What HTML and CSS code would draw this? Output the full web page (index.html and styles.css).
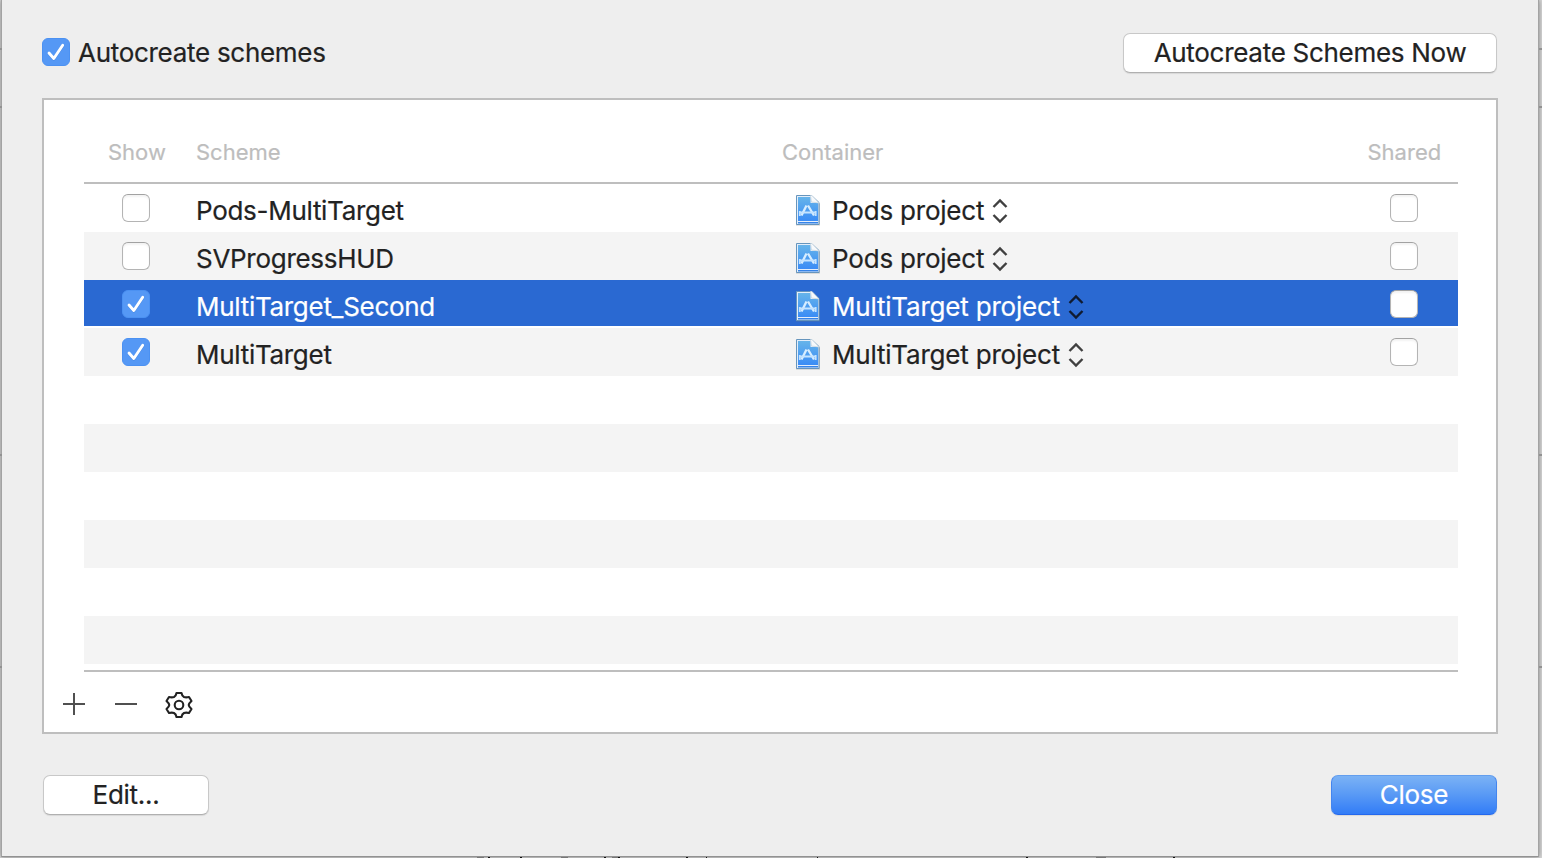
FILE: index.html
```
<!DOCTYPE html>
<html lang="en">
<head>
<meta charset="utf-8">
<title>Manage Schemes</title>
<link rel="stylesheet" href="styles.css">
</head>
<body>
<svg class="defs" width="0" height="0">
  <defs>
    <linearGradient id="doc-fill" x1="0" y1="0" x2="0" y2="1"><stop offset="0" stop-color="#66b4ea"/><stop offset="1" stop-color="#3a8cf6"/></linearGradient>
    <symbol id="doc" viewBox="0 0 26 34">
      <path d="M1 3H17L25 11V32.500H1Z" fill="#77777766"/>
      <path d="M1.500 2.500H16.500L24 9.500V31.500H1.500Z" fill="#e4eefa" stroke="#6695bd" stroke-width="1"/>
      <path d="M3 4H15.500V10H23V28H3Z" fill="url(#doc-fill)"/>
      <path d="M3 29H23V30.500H3Z" fill="#3583e8"/>
      <path d="M15.500 2.500L16.500 9L24 10L17 2.500Z" fill="#f7f9fb" stroke="#c4d2dd" stroke-width=".7"/>
      <path d="M11.500 12.500L6.500 22.500M13 12.500L19 22.500" fill="none" stroke="#d7edff" stroke-width="2.300"/>
      <path d="M4 19.500H21.500M4.800 18V23M20.700 18V23" fill="none" stroke="#c4e3ff" stroke-width="1.800"/>
    </symbol>
    <symbol id="arrows" viewBox="0 0 16 26"><path d="M1.500 9L8 2.500L14.500 9M1.500 17L8 23.500L14.500 17" fill="none" stroke="currentColor" stroke-width="2.400"/></symbol>
    <symbol id="check" viewBox="0 0 28 28"><path d="M7 15.500L11.800 21L21 7.500" fill="none" stroke="#2468bd" stroke-opacity=".35" stroke-width="3" stroke-linecap="round" stroke-linejoin="round"/><path d="M7 15L11.800 20.500L20.700 7.300" fill="none" stroke="#fff" stroke-width="2.900" stroke-linecap="round" stroke-linejoin="round"/></symbol>
  </defs>
</svg>
<main class="sheet">
  <header class="top">
    <label class="auto"><span class="box on"><svg><use href="#check"/></svg></span><span class="t">Autocreate schemes</span></label>
    <button class="button now"><span class="t">Autocreate Schemes Now</span></button>
  </header>
  <section class="panel">
    <div class="table">
      <div class="row head"><span class="t show">Show</span><span class="t">Scheme</span><span class="t">Container</span><span class="t">Shared</span></div>
      <div class="row"><span class="box"></span><span class="t">Pods-MultiTarget</span><span class="project"><svg class="doc"><use href="#doc"/></svg><span class="t">Pods project</span><svg class="arrows"><use href="#arrows"/></svg></span><span class="box"></span></div>
      <div class="row"><span class="box"></span><span class="t">SVProgressHUD</span><span class="project"><svg class="doc"><use href="#doc"/></svg><span class="t">Pods project</span><svg class="arrows"><use href="#arrows"/></svg></span><span class="box"></span></div>
      <div class="row selected"><span class="box on"><svg><use href="#check"/></svg></span><span class="t">MultiTarget_Second</span><span class="project"><svg class="doc"><use href="#doc"/></svg><span class="t">MultiTarget project</span><svg class="arrows"><use href="#arrows"/></svg></span><span class="box"></span></div>
      <div class="row"><span class="box on"><svg><use href="#check"/></svg></span><span class="t">MultiTarget</span><span class="project"><svg class="doc"><use href="#doc"/></svg><span class="t">MultiTarget project</span><svg class="arrows"><use href="#arrows"/></svg></span><span class="box"></span></div>
      <div class="row"></div><div class="row"></div><div class="row"></div><div class="row"></div><div class="row"></div><div class="row"></div>
    </div>
    <div class="tools">
      <svg width="22" height="22" viewBox="0 0 22 22"><path d="M0 11H22M11 0V22" stroke="#505050" stroke-width="2"/></svg>
      <svg width="22" height="22" viewBox="0 0 22 22"><path d="M0 11H22" stroke="#505050" stroke-width="2"/></svg>
      <svg class="gear" width="28" height="28" viewBox="0 0 28 28"><g fill="none" stroke="#222" stroke-width="2.100" stroke-linejoin="round"><path d="M11.500 2H16.500Q17 5 19 6Q21 6.800 24 6L26.500 10Q23.700 12.500 23.700 14Q23.700 15.500 26.500 18L24 22Q21 21.200 19 22Q17 23 16.500 26H11.500Q11 23 9 22Q7 21.200 4 22L1.500 18Q4.300 15.500 4.300 14Q4.300 12.500 1.500 10L4 6Q7 6.800 9 6Q11 5 11.500 2Z"/><circle cx="14" cy="14" r="4.300"/></g></svg>
    </div>
  </section>
  <footer class="bottom"><button class="button edit"><span class="t">Edit...</span></button><button class="button close"><span class="t">Close</span></button></footer>
</main>
<svg class="behind" width="1542" height="858"><path d="M0 49H2M0 107H2M0 455H2M0 667H2M1539 49H1542M1539 107H1542M1539 455H1542M1539 667H1542" stroke="#929292" stroke-width="2"/><path d="M477 857.500H484M561 857.500H568M612 857.500H620M1096 857.500H1106" stroke="#777"/><path d="M488 857.500H490M520 857.500H522M604 857.500H606M618 857.500H620M686 857.500H688M706 857.500H707M817 857.500H818M1026 857.500H1028M1173 857.500H1175" stroke="#111"/></svg>
</body>
</html>
```
FILE: styles.css
```
* { box-sizing: border-box; }
body { margin: 0; width: 1542px; height: 858px; overflow: hidden; background: #d7d7d7; font-family: Inter, "Liberation Sans", sans-serif; font-size: 26px; color: #222; }
.defs { position: absolute; }
.behind { position: absolute; left: 0; top: 0; pointer-events: none; }
.sheet { width: 1538px; height: 857px; margin-left: 1px; padding: 33px 41px 0 40px; background: #eee; border: 1px solid #a3a3a3; border-top: 0; border-bottom-color: #929292; box-shadow: 0 0 5px #0006; }
.top { display: flex; justify-content: space-between; align-items: flex-start; height: 65px; }
.t { white-space: nowrap; line-height: 40px; letter-spacing: -.29px; -webkit-text-stroke: .2px currentColor; }
.auto { display: flex; align-items: center; gap: 8px; height: 40px; }
.box { display: block; width: 28px; height: 28px; border-radius: 6px; border: 1px solid #b4b4b4; border-top-color: #a2a2a2; background: #fff; box-shadow: inset 0 2px 2px #0000000d; }
.box.on { border-color: #4b91f2; background: #5598f5; box-shadow: none; }
.box svg { display: block; width: 28px; height: 28px; margin: -1px; }
.auto .box { margin-bottom: 2px; }
.button { display: flex; justify-content: center; align-items: center; height: 40px; padding: 0; border: 1px solid #c8c8c8; border-bottom-color: #b0b0b0; border-radius: 7px; background: #fff; color: #222; font: inherit; box-shadow: 0 1px 1px #00000018; }
.now { width: 374px; }
.panel { width: 1456px; height: 636px; padding: 20px 38px 0 40px; border: 2px solid #bebebe; background: #fff; }
.table { height: 552px; border-bottom: 2px solid #bebebe; }
.row { display: grid; grid-template-columns: 74px 600px 594px 28px; height: 48px; padding-left: 38px; align-items: start; }
.row:nth-child(odd) { background: #f4f4f4; }
.row > .box { margin-top: 10px; }
.row > .t { line-height: 54px; }
.row.head { height: 64px; background: #fff; border-bottom: 2px solid #bebebe; color: #bdbdbd; font-size: 22px; grid-template-columns: 74px 586px 585.5px 80px; }
.head > .t { line-height: 64px; letter-spacing: 0; }
.head .show { margin-left: -14px; }
.row.selected { background: linear-gradient(#2a69d2 46px, #fff 46px); color: #fff; }
.project { display: flex; align-items: flex-start; }
.project .t { line-height: 54px; letter-spacing: -.2px; }
.doc { width: 26px; height: 34px; margin: 9px 11px 0 -1px; }
.arrows { width: 16px; height: 26px; margin: 14px 0 0 8px; color: #404040; }
.selected .arrows { color: #101b30; }
.tools { display: flex; align-items: center; gap: 30px; height: 60px; margin-left: -21px; padding-top: 4px; }
.gear { margin-left: -2px; margin-top: 2px; }
.bottom { display: flex; justify-content: space-between; padding: 41px 0 0 1px; }
.edit, .close { width: 166px; }
.close { background: linear-gradient(#7bb2f5, #5899f5 50%, #327cf7); border-color: #639eee #4385ef #2468ed; color: #fff; }
```
